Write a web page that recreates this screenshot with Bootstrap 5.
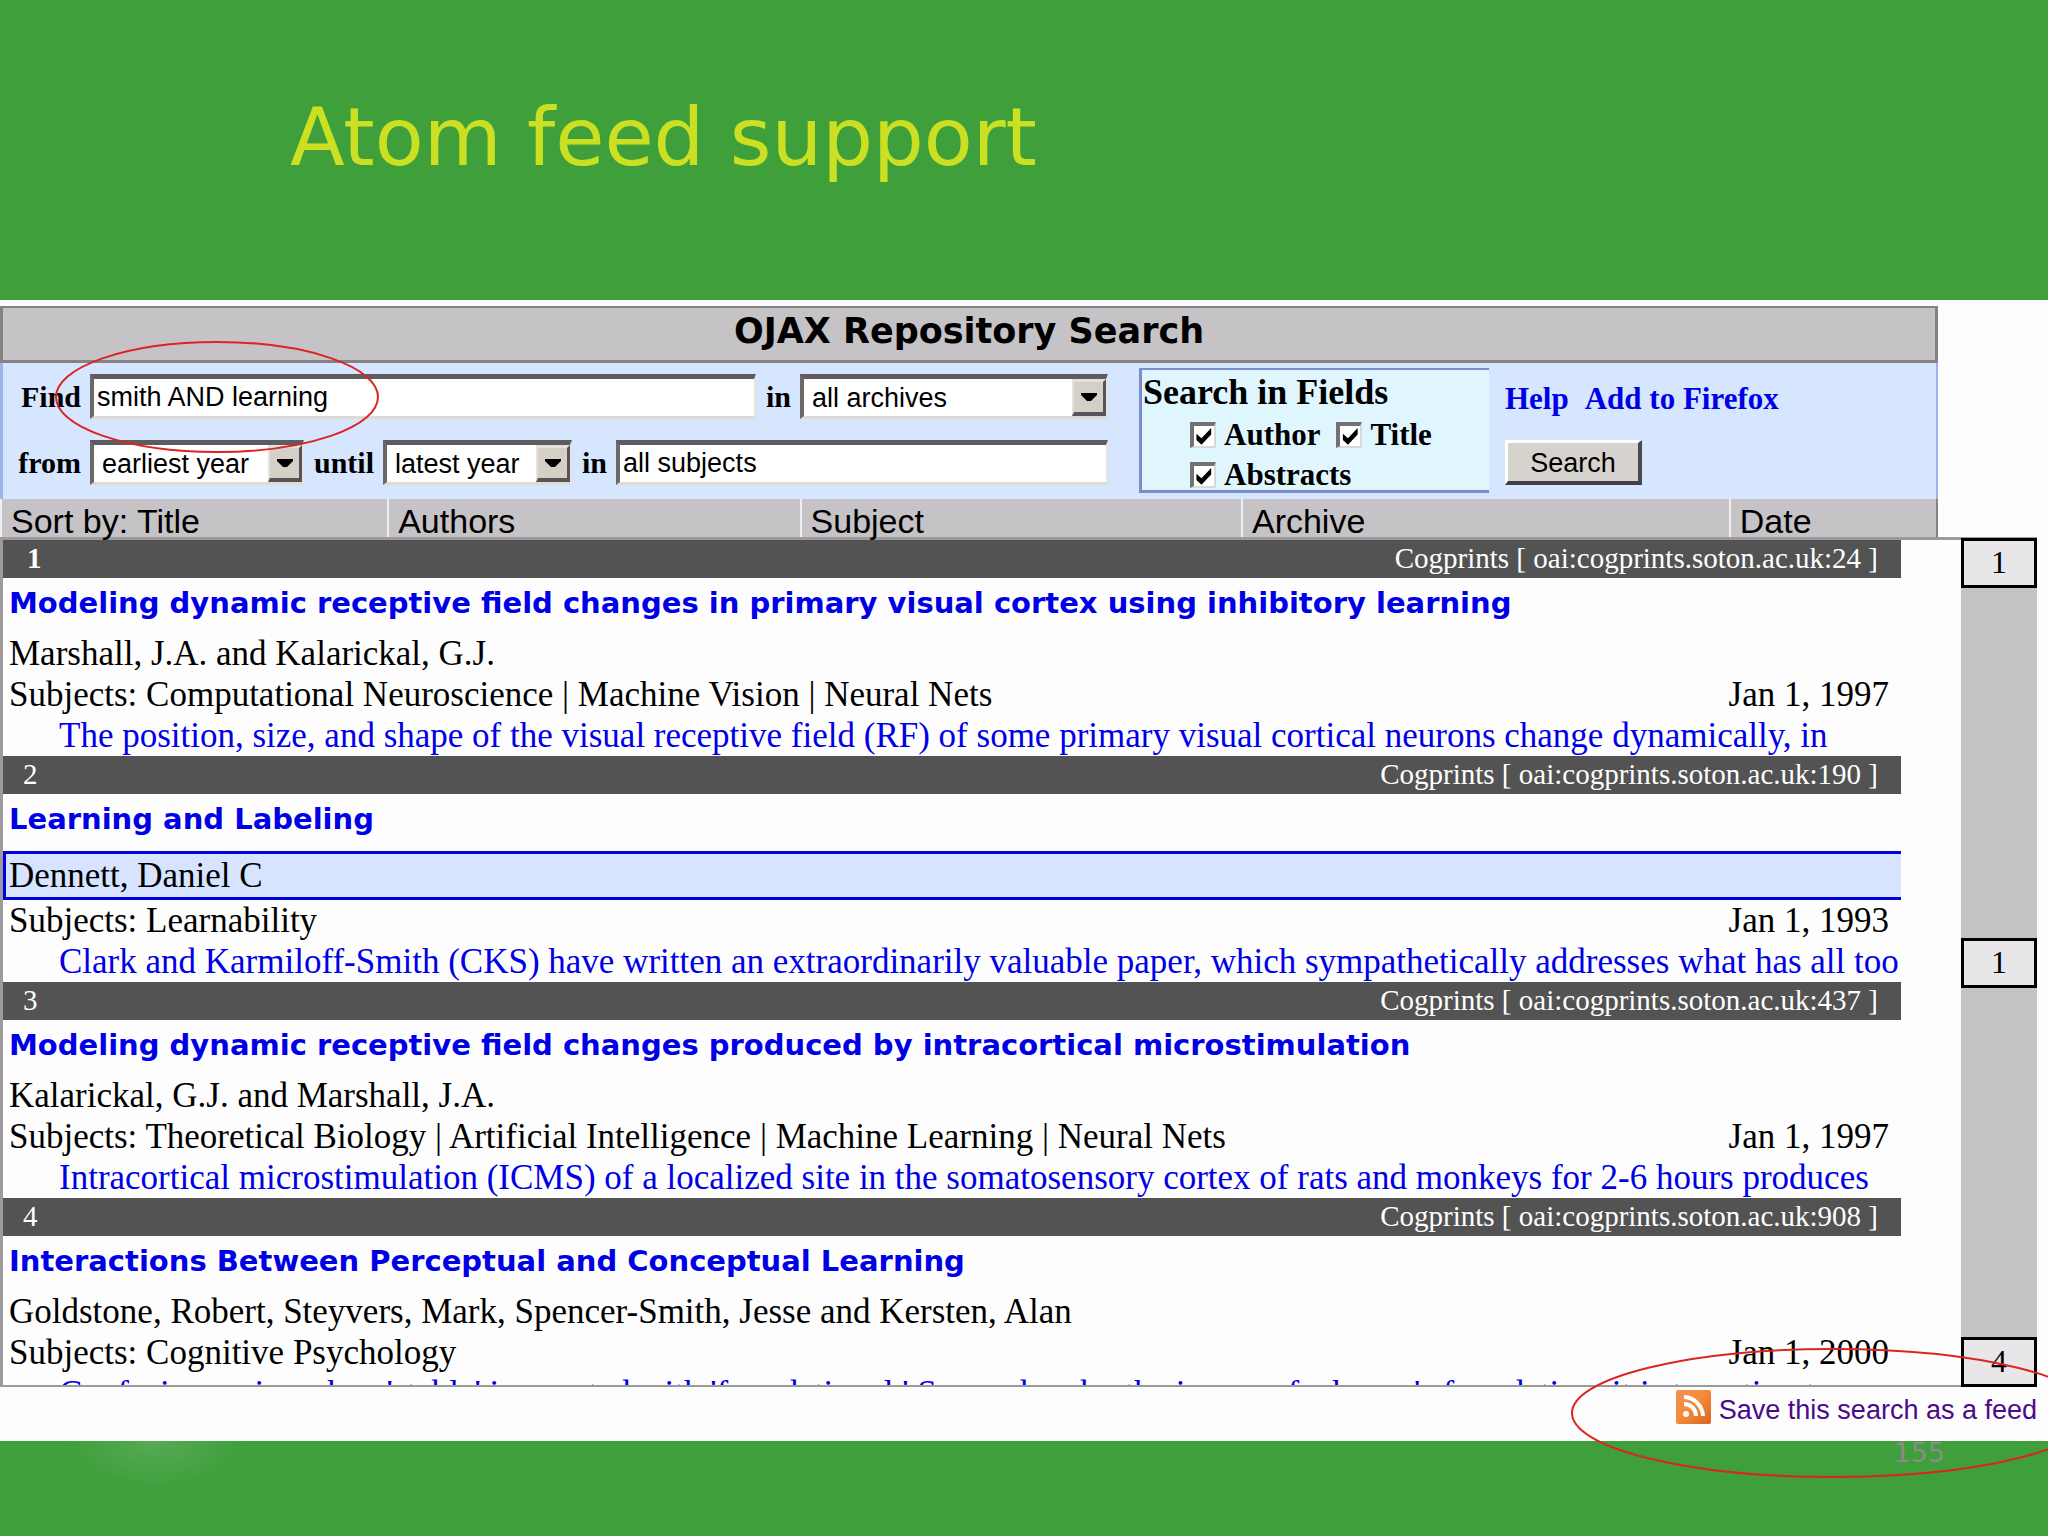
<!DOCTYPE html>
<html lang="en">
<head>
<meta charset="utf-8">
<meta name="viewport" content="width=device-width, initial-scale=1">
<title>Atom feed support</title>
<link href="https://cdn.jsdelivr.net/npm/bootstrap@5.3.0/dist/css/bootstrap.min.css" rel="stylesheet">
<style>
body{background:#3e9f3b;color:#000;font-family:"Liberation Serif",serif;overflow-x:hidden}
a{text-decoration:none;color:#0000e6}
.slide{position:relative;min-height:1536px;overflow:hidden}
.slide-title{height:300px;padding:84px 0 0 290px;color:#cbe022;font:400 80px/108px "DejaVu Sans",sans-serif;margin:0}
.shot{background:#fdfdfd;padding:6px 11px 0 0;height:1141px}
.search-panel{margin-right:99px}
.panel-title{height:57px;background:#c6c3c6;border:3px solid #848284;border-top-width:2px;font:700 35px/46px "DejaVu Sans",sans-serif;text-align:center;margin:0;padding-left:0}
.panel-form{height:136px;background:#d6e6ff;border:solid #9cb4e8;border-width:0 2px 0 3px}
.form-left{width:1136px;padding:11px 31px 0 0;gap:21px}
.form-left label{font-weight:700;font-size:30px;line-height:45px}
.lead-label{width:87px;padding-right:9px;text-align:right}
.mid-label{padding:0 9px 0 10px}
.sunk{font:400 27px/36px "Liberation Sans",sans-serif;color:#000;background:#fff;border:solid;border-width:5px 2px 3px 4px;border-color:#5e5c60 #e6e4dd #dedbd4 #6b6868;border-radius:0;height:45px;min-width:0;outline:0}
input.sunk{padding:0 0 0 3px}
.sunk select{appearance:none;border:0;background:transparent;font:inherit;color:inherit;height:37px;padding:0 0 0 8px;min-width:0;outline:0}
.arrow{width:34px;background:#d4d0c8;border:solid;border-width:3px 3px 4px 2px;border-color:#e4e1da #55545a #55545a #e4e1da;pointer-events:none}
.year-a{width:214px}.year-b{width:189px}.arch{width:308px}
.fields{width:350px;margin:5px 0 6px;background:#e0f6ff;border:solid #7d8dcb;border-width:2px 0 3px 3px;line-height:40px}
.fields legend{float:left;font-size:36px;font-weight:700;line-height:44px;height:45px;margin:0;padding-left:1px}
.fields .ticks{clear:both}
.fields label,.panel-links{font-weight:700;font-size:31px}
.tick{appearance:none;width:26px;height:26px;margin:0 8px 0 0;background:#fff;border:solid;border-width:4px 2px 2px 4px;border-color:#747074 #d8dada #d8dada #747074;display:inline-grid;place-items:center}
.tick:checked::before{content:"";width:18px;height:18px;background:#000;clip-path:polygon(8% 38%,36% 62%,90% 5%,90% 42%,36% 98%,8% 72%)}
.panel-links{padding:18px 0 0 16px;line-height:36px}
.raised{width:137px;height:45px;font:400 27px/34px "Liberation Sans",sans-serif;background:#d6d3ce;color:#000;border:solid;border-width:3px 4px 4px 3px;border-color:#fff #4a4a52 #404048 #fff;padding:2px 0 0;display:block;margin-top:23px}
.sort-row{height:38px;background:#c6c3c6;border:solid #848284;border-width:0 2px 0 0;font:400 34px/44px "Liberation Sans",sans-serif}
.sort-row a{color:#000;padding-left:9px;border-left:2px solid #efefef}
.s1{width:20%}.s2{width:21.3%}.s3{width:22.8%}.s4{width:25.2%}
.results{height:850px;border:solid #9c9a9c;border-width:3px 0 2px 3px}
.hits{height:845px;overflow:hidden}
.hit-bar{background:#525352;color:#fff;height:38px;padding:0 23px 0 20px;font-size:29px;line-height:36px}
.hit-title{font:700 29px/49px "DejaVu Sans",sans-serif;padding:1px 0 5px 6px;margin:0;white-space:nowrap}
.hit-line{font-size:35px;line-height:41px;padding:0 12px 0 6px;white-space:nowrap}
.hit-abs{padding-left:56px;overflow:hidden;height:41px}
.picked{background:#d6e4ff;border:3px solid #0000e0;border-right:0;padding:1px 0 1px 3px;margin-top:2px}
.rail{width:76px;margin-left:60px;background:#c6c3c6;margin-top:-2px;margin-bottom:-2px}
.stop{height:50px;background:#e9e6ea;border:3px solid #000;text-align:center;font-size:32px;line-height:42px;color:#000;font-family:"Liberation Serif",serif}
.feed-link{font:400 27px/34px "Liberation Sans",sans-serif;color:#4a0a8c;gap:8px}
.feed-link span{padding-top:6px}
.page-no{text-align:right;padding-right:103px;color:#8b8c8a;font:400 27px/24px "DejaVu Sans",sans-serif}
.page-foot{height:95px;background:radial-gradient(ellipse 90px 50px at 155px 0,#56aa54,#3e9f3b00)}
.rings{position:absolute;left:0;top:0;width:2048px;height:1536px;pointer-events:none}
</style>
<script src="https://cdn.jsdelivr.net/npm/bootstrap@5.3.0/dist/js/bootstrap.bundle.min.js"></script>
</head>
<body>
<main class="slide">
<h1 class="slide-title">Atom feed support</h1>
<section class="shot">
  <div class="search-panel">
    <h2 class="panel-title">OJAX Repository Search</h2>
    <form class="panel-form d-flex">
      <div class="form-left d-flex flex-column flex-shrink-0">
        <div class="d-flex">
          <label class="lead-label" for="q">Find</label>
          <input class="sunk flex-grow-1" id="q" type="text" value="smith AND learning">
          <label class="mid-label" for="arch">in</label>
          <div class="sunk arch d-flex"><select id="arch" class="flex-grow-1"><option>all archives</option></select><span class="arrow d-flex align-items-center justify-content-center"><svg width="16" height="9"><path d="M0 0H16V2L10 8H6L0 2Z"/></svg></span></div>
        </div>
        <div class="d-flex">
          <label class="lead-label" for="y1">from</label>
          <div class="sunk year-a d-flex"><select id="y1" class="flex-grow-1"><option>earliest year</option></select><span class="arrow d-flex align-items-center justify-content-center"><svg width="16" height="9"><path d="M0 0H16V2L10 8H6L0 2Z"/></svg></span></div>
          <label class="mid-label" for="y2">until</label>
          <div class="sunk year-b d-flex"><select id="y2" class="flex-grow-1"><option>latest year</option></select><span class="arrow d-flex align-items-center justify-content-center"><svg width="16" height="9"><path d="M0 0H16V2L10 8H6L0 2Z"/></svg></span></div>
          <label class="mid-label" for="subj">in</label>
          <input class="sunk flex-grow-1" id="subj" type="text" value="all subjects">
        </div>
      </div>
      <fieldset class="fields flex-shrink-0">
        <legend>Search in Fields</legend>
        <div class="ticks d-flex ps-5">
          <div class="d-flex align-items-center me-3"><input class="tick" type="checkbox" id="fa" checked><label for="fa">Author</label></div>
          <div class="d-flex align-items-center"><input class="tick" type="checkbox" id="ft" checked><label for="ft">Title</label></div>
        </div>
        <div class="d-flex align-items-center ps-5"><input class="tick" type="checkbox" id="fb" checked><label for="fb">Abstracts</label></div>
      </fieldset>
      <div class="panel-links">
        <div class="d-flex gap-3"><a href="#">Help</a><a href="#">Add to Firefox</a></div>
        <button type="button" class="raised">Search</button>
      </div>
    </form>
    <nav class="sort-row d-flex">
      <a class="s1" href="#">Sort by: Title</a><a class="s2" href="#">Authors</a><a class="s3" href="#">Subject</a><a class="s4" href="#">Archive</a><a class="flex-grow-1" href="#">Date</a>
    </nav>
  </div>
  <div class="results d-flex">
    <div class="hits flex-grow-1">
      <article>
        <div class="hit-bar d-flex justify-content-between"><b class="ps-1">1</b><span>Cogprints [ oai:cogprints.soton.ac.uk:24 ]</span></div>
        <h3 class="hit-title"><a href="#">Modeling dynamic receptive field changes in primary visual cortex using inhibitory learning</a></h3>
        <div class="hit-line">Marshall, J.A. and Kalarickal, G.J.</div>
        <div class="hit-line d-flex justify-content-between"><span>Subjects: Computational Neuroscience | Machine Vision | Neural Nets</span><span>Jan 1, 1997</span></div>
        <div class="hit-line hit-abs"><a href="#">The position, size, and shape of the visual receptive field (RF) of some primary visual cortical neurons change dynamically, in</a></div>
      </article>
      <article>
        <div class="hit-bar d-flex justify-content-between"><span>2</span><span>Cogprints [ oai:cogprints.soton.ac.uk:190 ]</span></div>
        <h3 class="hit-title"><a href="#">Learning and Labeling</a></h3>
        <div class="hit-line picked">Dennett, Daniel C</div>
        <div class="hit-line d-flex justify-content-between"><span>Subjects: Learnability</span><span>Jan 1, 1993</span></div>
        <div class="hit-line hit-abs"><a href="#">Clark and Karmiloff-Smith (CKS) have written an extraordinarily valuable paper, which sympathetically addresses what has all too</a></div>
      </article>
      <article>
        <div class="hit-bar d-flex justify-content-between"><span>3</span><span>Cogprints [ oai:cogprints.soton.ac.uk:437 ]</span></div>
        <h3 class="hit-title"><a href="#">Modeling dynamic receptive field changes produced by intracortical microstimulation</a></h3>
        <div class="hit-line">Kalarickal, G.J. and Marshall, J.A.</div>
        <div class="hit-line d-flex justify-content-between"><span>Subjects: Theoretical Biology | Artificial Intelligence | Machine Learning | Neural Nets</span><span>Jan 1, 1997</span></div>
        <div class="hit-line hit-abs"><a href="#">Intracortical microstimulation (ICMS) of a localized site in the somatosensory cortex of rats and monkeys for 2-6 hours produces</a></div>
      </article>
      <article>
        <div class="hit-bar d-flex justify-content-between"><span>4</span><span>Cogprints [ oai:cogprints.soton.ac.uk:908 ]</span></div>
        <h3 class="hit-title"><a href="#">Interactions Between Perceptual and Conceptual Learning</a></h3>
        <div class="hit-line">Goldstone, Robert, Steyvers, Mark, Spencer-Smith, Jesse and Kersten, Alan</div>
        <div class="hit-line d-flex justify-content-between"><span>Subjects: Cognitive Psychology</span><span>Jan 1, 2000</span></div>
        <div class="hit-line hit-abs"><a href="#">Confusions arise when 'stable' is equated with 'foundational.' Spurred on by the image of a house's foundation, it is tempting to</a></div>
      </article>
    </div>
    <div class="rail flex-shrink-0 d-flex flex-column justify-content-between">
      <a class="stop" href="#">1</a><a class="stop" href="#">1</a><a class="stop" href="#">4</a>
    </div>
  </div>
  <div class="d-flex justify-content-end">
    <a class="feed-link d-flex align-items-center" href="#">
      <svg width="35" height="34" viewBox="0 0 35 34"><defs><linearGradient id="og" x2="1" y2="1"><stop offset="0" stop-color="#f0935a"/><stop offset=".5" stop-color="#f38a35"/><stop offset="1" stop-color="#d96420"/></linearGradient></defs><rect width="35" height="34" rx="2" fill="url(#og)"/><g fill="none" stroke="#fff" stroke-width="4"><path d="M8 7A20 20 0 0 1 27 26"/><path d="M8 14A12 12 0 0 1 20 26"/></g><circle cx="10" cy="24" r="3" fill="#fff"/></svg>
      <span>Save this search as a feed</span></a>
  </div>
</section>
<footer class="page-foot"><div class="page-no">155</div></footer>
<svg class="rings" viewBox="0 0 2048 1536" fill="none" stroke="#dc2420" stroke-width="2"><ellipse cx="217" cy="397" rx="161" ry="55"/><ellipse cx="1833" cy="1413" rx="261" ry="64"/></svg>
</main>
</body>
</html>
